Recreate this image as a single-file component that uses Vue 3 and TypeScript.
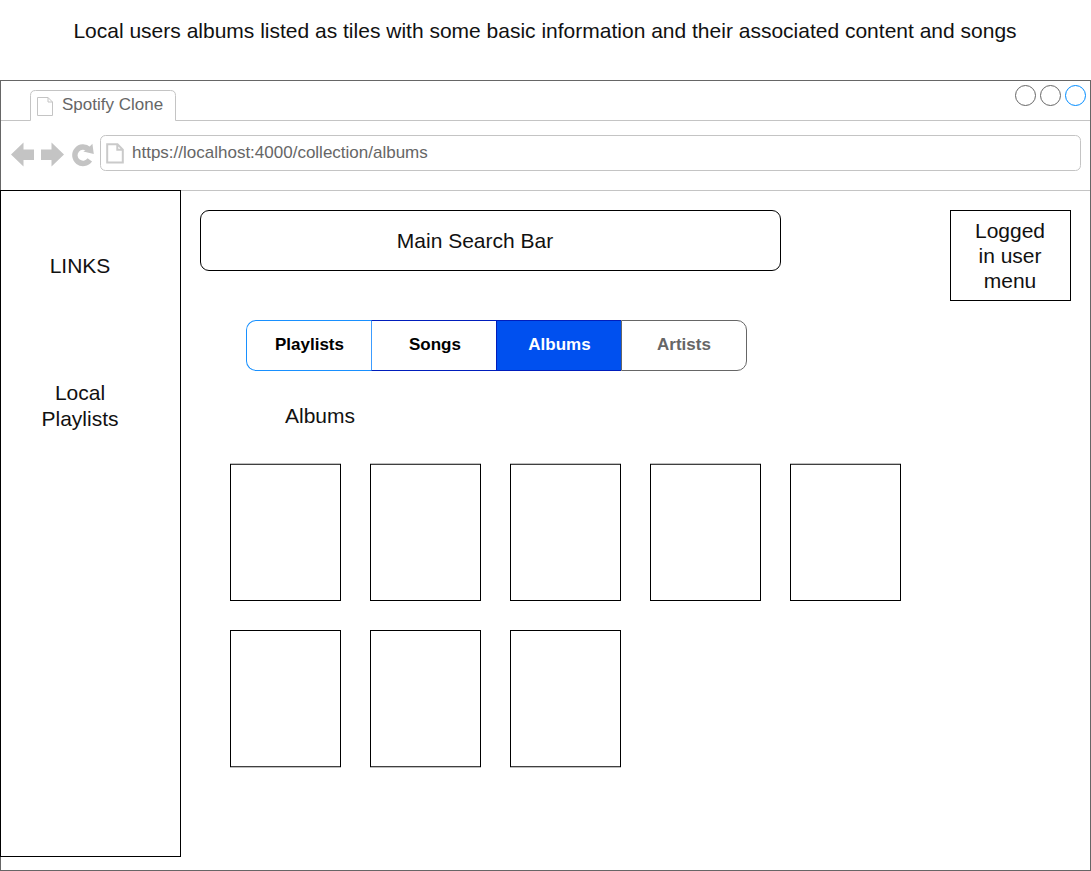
<script setup lang="ts">
interface Tab { label: string; kind: string }

const tabs: Tab[] = [
  { label: 'Playlists', kind: 'first' },
  { label: 'Songs', kind: 'songs' },
  { label: 'Albums', kind: 'active' },
  { label: 'Artists', kind: 'last' },
]
const albumCount = 8
</script>

<template>
  <div class="page">
    <h1 class="caption"><span>Local users albums listed as tiles with some basic information and their associated content and songs</span></h1>
    <div class="window">
      <svg class="chrome" width="1091" height="111" viewBox="0 80 1091 111" fill="none">
        <path d="M1 120.5H30.5V95.5Q30.5 90.5 35.5 90.5H170.5Q175.5 90.5 175.5 95.5V120.5H1090" stroke="#c4c4c4" />
        <path d="M37.5 97.5H48L52.5 102V115.5H37.5ZM48 97.5V102H52.5" stroke="#c4c4c4" />
        <circle cx="1025.5" cy="95.5" r="10" stroke="#666" />
        <circle cx="1050.5" cy="95.5" r="10" stroke="#666" />
        <circle cx="1075.5" cy="95.5" r="10" stroke="#008cff" />
        <path d="M11 154.500L23.500 142.500V149.500H34V160H23.500V166.500Z" fill="#c4c4c4" />
        <path d="M64 154.500L51.500 142.500V149.500H41V160H51.500V166.500Z" fill="#c4c4c4" />
        <path d="M88.700 149.300A8.200 8.200 0 1 0 89.800 159.900" stroke="#c4c4c4" stroke-width="5.400" />
        <path d="M92.400 143.800L93.800 154L83.300 151.600L87 149.200Z" fill="#c4c4c4" />
        <rect x="100.500" y="135.500" width="980" height="35" rx="5" stroke="#c4c4c4" />
        <path d="M107.200 144.300H117.500L122.800 149.600V162.500H107.200ZM117.300 144.300V149.800H122.800" stroke="#cacaca" stroke-width="2" />
        <path d="M1 190.500H1090" stroke="#c4c4c4" />
      </svg>
      <div class="browser">
        <div class="tab-row"><span class="tab-title">Spotify Clone</span></div>
        <div class="url-row"><span class="url">https://localhost:4000/collection/albums</span></div>
      </div>
      <div class="body">
        <aside class="sidebar">
          <p class="links">LINKS</p>
          <p class="local">Local<br>Playlists</p>
        </aside>
        <main class="main">
          <div class="top">
            <div class="search"><span>Main Search Bar</span></div>
            <div class="user">Logged<br>in user<br>menu</div>
          </div>
          <nav class="tabs">
            <button v-for="t in tabs" :key="t.label" :class="['seg', t.kind]">{{ t.label }}</button>
          </nav>
          <h2 class="heading">Albums</h2>
          <div class="grid">
            <svg v-for="n in albumCount" :key="n" class="tile" width="111" height="138" fill="none">
              <rect x="0.5" :y="n > 5 ? 0.5 : 1.25" width="110" height="136.25" stroke="#000" />
            </svg>
          </div>
        </main>
      </div>
    </div>
  </div>
</template>

<style>
body { margin: 0; background: #fff; }
</style>

<style scoped>
* { box-sizing: border-box; }
.page { width: 1091px; height: 871px; overflow: hidden; font-family: "Liberation Sans", Arial, sans-serif; font-size: 21px; line-height: 25px; color: #111; }
h1, h2, p { margin: 0; font-size: inherit; font-weight: 400; }
.caption { height: 80px; padding: 18px 1px 0 0; text-align: center; white-space: nowrap; }
.window { position: relative; height: 791px; border: 1px solid #666; }
.chrome { position: absolute; left: -1px; top: -1px; z-index: 1; }
.browser { height: 109px; color: #666; font-size: 17px; line-height: 20px; }
.tab-row { height: 40px; padding: 14px 0 0 61px; }
.url-row { padding: 22px 0 0 131px; }
.tab-row span, .url-row span { display: block; }
.body { display: flex; height: 680px; }
.sidebar { position: relative; z-index: 2; width: 181px; height: 667px; margin-left: -1px; border: 1px solid #000; text-align: center; }
.links { padding: 62px 21px 0 0; }
.local { padding: 102px 21px 0 0; line-height: 26px; }
.main { flex: 1; padding: 20px 19px 0 19px; }
.top { display: flex; justify-content: space-between; height: 110px; }
.search { width: 581px; height: 61px; padding: 17px 31px 0 0; border: 1px solid #000; border-radius: 9px; text-align: center; }
.user { width: 121px; height: 91px; padding: 7px 1px 0 0; border: 1px solid #000; text-align: center; }
.tabs { display: flex; width: 501px; height: 51px; margin-left: 46px; }
.seg { width: 125px; height: 51px; padding: 0 0 2px; border: 0 solid #001dbc; border-width: 1px 0 1px 1px; background: #fff; font: bold 17px "Liberation Sans", Arial, sans-serif; color: #000; }
.seg.first { border-color: #1890ff; border-radius: 10px 0 0 10px; padding-left: 1px; }
.seg.songs { padding-left: 2px; border-left-color: #3c9cff; }
.seg.active { padding-left: 1px; background: #0050ef; color: #fff; }
.seg.last { width: 126px; border: 1px solid #666; border-radius: 0 10px 10px 0; color: #666; }
.heading { margin: 32px 0 0 85px; }
.grid { display: grid; grid-template-columns: repeat(5, 111px); column-gap: 29px; row-gap: 29px; margin: 35px 0 0 30px; }
.tile { display: block; }
</style>
